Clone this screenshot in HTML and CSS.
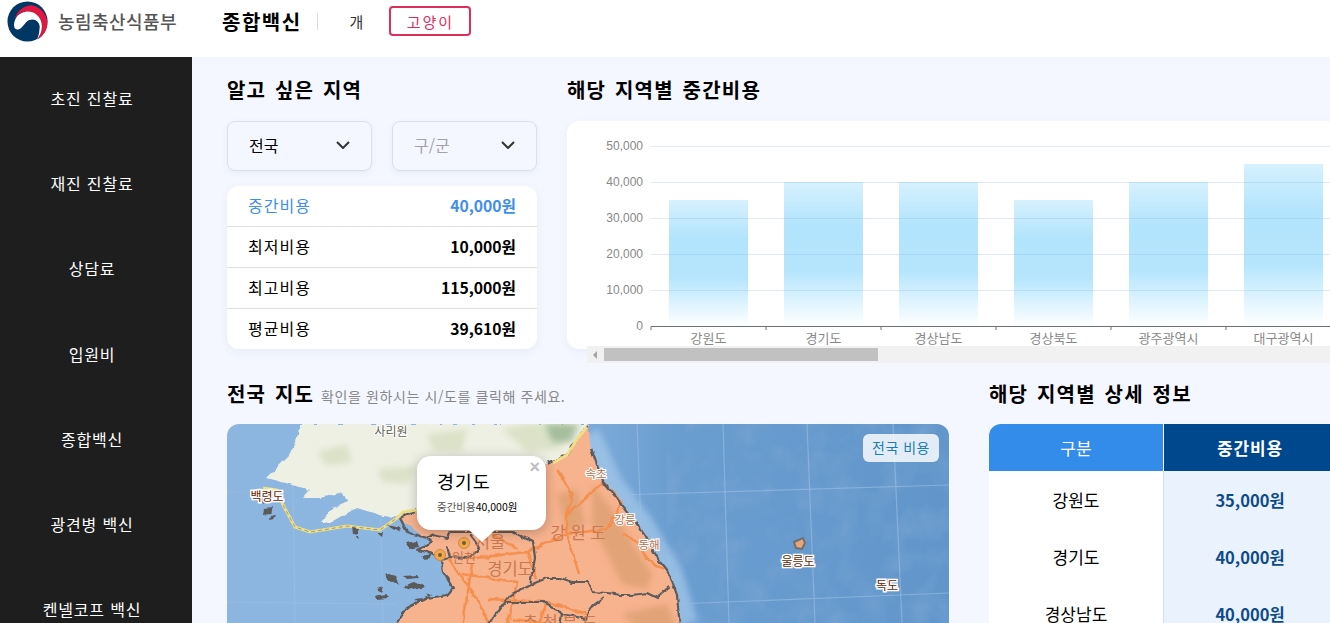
FILE: index.html
```html
<!DOCTYPE html>
<html lang="ko">
<head>
<meta charset="UTF-8">
<title>종합백신 - 농림축산식품부</title>
<meta name="viewport" content="width=device-width, initial-scale=1.0">
<link rel="stylesheet" href="styles.css">
</head>
<body>
<header class="topbar">
    <div class="brand">
        <svg class="brand-logo" viewBox="0 0 42 42" width="41" height="41">
            <circle cx="21" cy="21" r="20.500" fill="#003764"/>
            <path fill="#e0173f" d="M8 18 C11 9 19 4 26 4.500 C35 6 41 14 41.400 22 C41.500 30 37 36 31 39.700 C35 35 37 28 35 21 C32 13 24 10 18 11 C13 12 10 15 8 18 Z"/>
            <path fill="#fff" d="M7.500 27 C6 20 11 12 19 11 C27 10 34 15 35.500 23 C36.500 29 34.500 35 31 39 C33 34 33.500 30 33 26 C33 21 27 18 22 20 C18 22 16 28 12 29 C10 29.500 8 29 7.500 27 Z"/>
            <circle cx="26" cy="26.500" r="7.500" fill="#003764"/>
        </svg>
        <span class="brand-name">농림축산식품부</span>
    </div>
    <strong class="page-name">종합백신</strong>
    <span class="divider"></span>
    <a class="pet-tab">개</a>
    <a class="pet-tab active">고양이</a>
</header>

<div class="layout">
    <nav class="sidebar">
        <a>초진 진찰료</a>
        <a>재진 진찰료</a>
        <a>상담료</a>
        <a>입원비</a>
        <a>종합백신</a>
        <a>광견병 백신</a>
        <a>켄넬코프 백신</a>
    </nav>

    <main class="content">
        <div class="row row-top">
            <section class="area-panel">
                <h2 class="section-title">알고 싶은 지역</h2>
                <div class="select-row">
                    <div class="select-box">
                        <span>전국</span>
                        <svg class="chevron" viewBox="0 0 14 8" width="14" height="8"><path d="M1 1 L7 7 L13 1" fill="none" stroke="#333" stroke-width="2"/></svg>
                    </div>
                    <div class="select-box placeholder">
                        <span>구/군</span>
                        <svg class="chevron" viewBox="0 0 14 8" width="14" height="8"><path d="M1 1 L7 7 L13 1" fill="none" stroke="#333" stroke-width="2"/></svg>
                    </div>
                </div>
                <ul class="cost-list">
                    <li class="highlight"><span>중간비용</span><b>40,000원</b></li>
                    <li><span>최저비용</span><b>10,000원</b></li>
                    <li><span>최고비용</span><b>115,000원</b></li>
                    <li><span>평균비용</span><b>39,610원</b></li>
                </ul>
            </section>

            <section class="chart-panel">
                <h2 class="section-title">해당 지역별 중간비용</h2>
                <div class="chart-card">
                    <svg class="chart" viewBox="0 0 800 228" width="800" height="228">
                        <defs>
                            <linearGradient id="barFill" x1="0" y1="0" x2="0" y2="1">
                                <stop offset="0" stop-color="#5cc6fb" stop-opacity="0.25"/>
                                <stop offset="0.3" stop-color="#5cc6fb" stop-opacity="0.47"/>
                                <stop offset="0.62" stop-color="#5cc6fb" stop-opacity="0.45"/>
                                <stop offset="1" stop-color="#5cc6fb" stop-opacity="0"/>
                            </linearGradient>
                        </defs>
                        <g class="grid">
                            <line x1="84" x2="800" y1="25.500" y2="25.500"/>
                            <line x1="84" x2="800" y1="61.500" y2="61.500"/>
                            <line x1="84" x2="800" y1="97.500" y2="97.500"/>
                            <line x1="84" x2="800" y1="133.500" y2="133.500"/>
                            <line x1="84" x2="800" y1="169.500" y2="169.500"/>
                        </g>
                        <g class="y-labels">
                            <text x="76" y="29">50,000</text>
                            <text x="76" y="65">40,000</text>
                            <text x="76" y="101">30,000</text>
                            <text x="76" y="137">20,000</text>
                            <text x="76" y="173">10,000</text>
                            <text x="76" y="209">0</text>
                        </g>
                        <g fill="url(#barFill)">
                            <rect x="102" y="79" width="79" height="126"/>
                            <rect x="217" y="61" width="79" height="144"/>
                            <rect x="332" y="61" width="79" height="144"/>
                            <rect x="447" y="79" width="79" height="126"/>
                            <rect x="562" y="61" width="79" height="144"/>
                            <rect x="677" y="43" width="79" height="162"/>
                        </g>
                        <path class="axis" d="M84 209 V205.500 H800 M199 205.500 V209 M314 205.500 V209 M429 205.500 V209 M544 205.500 V209 M659 205.500 V209 M774 205.500 V209"/>
                        <g class="x-labels">
                            <text x="141.500" y="222">강원도</text>
                            <text x="256.500" y="222">경기도</text>
                            <text x="371.500" y="222">경상남도</text>
                            <text x="486.500" y="222">경상북도</text>
                            <text x="601.500" y="222">광주광역시</text>
                            <text x="716.500" y="222">대구광역시</text>
                        </g>
                    </svg>
                </div>
                <div class="scrollbar">
                    <span class="scroll-arrow"></span>
                    <span class="scroll-thumb"></span>
                </div>
            </section>
        </div>

        <div class="row row-bottom">
            <section class="map-panel">
                <h2 class="section-title">전국 지도 <small>확인을 원하시는 시/도를 클릭해 주세요.</small></h2>
                <div class="map-box">
                    <svg class="map" viewBox="0 0 722 199" width="722" height="199">
                        <defs>
                            <linearGradient id="sea" x1="0" y1="0" x2="1" y2="0">
                                <stop offset="0" stop-color="#8cb5df"/>
                                <stop offset="0.4" stop-color="#8db7e0"/>
                                <stop offset="0.62" stop-color="#6a9dd0"/>
                                <stop offset="1" stop-color="#6296cb"/>
                            </linearGradient>
                            <filter id="soft" x="-20%" y="-20%" width="140%" height="140%"><feGaussianBlur stdDeviation="3"/></filter>
                            <filter id="rough" x="-5%" y="-5%" width="110%" height="110%">
                                <feTurbulence type="fractalNoise" baseFrequency="0.12" numOctaves="2" seed="4"/>
                                <feDisplacementMap in="SourceGraphic" scale="5" xChannelSelector="R" yChannelSelector="G"/>
                            </filter>
                            <filter id="mottle" x="0" y="0" width="100%" height="100%">
                                <feTurbulence type="fractalNoise" baseFrequency="0.035" numOctaves="3" seed="9"/>
                                <feColorMatrix values="0 0 0 0 0.25  0 0 0 0 0.42  0 0 0 0 0.68  1.600 0 0 0 -0.650"/>
                            </filter>
                        </defs>
                        <rect width="722" height="199" fill="url(#sea)"/>
                        <rect class="sea-mottle" x="440" width="282" height="199" filter="url(#mottle)"/>
                        <path class="coast-glow" filter="url(#soft)" d="M362 10 L385 60 L415 100 L445 150 L460 200"/>
                        <!-- 경위선 -->
                        <g class="graticule">
                            <path d="M66 60 L68 199 M153 60 L156 199 M410 0 L414 100 M496 0 L502 199 M580 0 L588 199 M666 0 L675 199"/>
                            <path d="M0 68 L60 68 M390 71 L722 61 M0 178 L170 180 M450 180 L722 169"/>
                        </g>
                        <!-- 북측 육지 -->
                        <path class="land-north" filter="url(#rough)" d="M73 0 L70 14 L63 31 L40 54 L66 61 L83 66 L76 74 L93 74 L116 68 L120 78 L106 84 L93 98 L106 98 L130 84 L153 91 L166 94 L173 89 L190 86 L320 40 L340 31 L351 14 L360 0 Z"/>
                        <g class="relief-green" filter="url(#soft)">
                            <path d="M275 5 L300 0 H345 L335 25 L300 28 Z"/>
                            <path d="M90 28 L120 20 L125 38 L100 42 Z"/>
                            <path d="M150 45 L190 42 L180 60 L155 58 Z"/>
                            <path d="M200 10 L240 5 L235 28 L205 26 Z"/>
                        </g>
                        <path class="relief-dark" filter="url(#soft)" d="M318 0 H352 L345 18 L325 18 Z"/>
                        <!-- 남측 육지 -->
                        <path class="land-south" filter="url(#rough)" d="M360 0 L364 24 L376 58 L393 78 L413 104 L433 138 L443 151 L450 171 L453 205 H170 L170 199 L180 184 L200 174 L220 171 L226 164 L216 148 L214 135 L200 128 L190 126 L205 118 L200 114 L190 108 L180 100 L173 94 L190 86 L320 40 L340 31 L351 14 Z"/>
                        <g class="relief-brown" filter="url(#soft)">
                            <path d="M365 60 L385 85 L400 110 L425 150 L420 165 L395 160 L380 130 L365 100 Z"/>
                            <path d="M330 70 L350 65 L358 100 L340 110 Z"/>
                            <path d="M395 190 L440 180 L450 205 H410 Z"/>
                        </g>
                        <g class="roads" filter="url(#rough)">
                            <path d="M222 135 L250 175 L262 200 M240 135 L300 128 L340 110 L380 105 L395 78 L376 58 M300 128 L310 155 M340 110 L352 150 M262 175 L320 178 L360 190 M320 178 L310 205 M376 58 L363 70 L340 90 L340 110 M395 110 L410 118 L420 135 L435 145"/>
                            <path d="M235 150 L290 158 L280 205 M265 110 L290 125 M245 140 L235 205 M330 45 L345 70 L340 90 M285 195 L360 205"/>
                        </g>
                        <g class="borders" filter="url(#rough)">
                            <path d="M173 94 L180 108 L200 114 L206 111 L220 114 L223 108 L240 108 L253 108 L270 108 L286 108 L306 118 L308 134 L303 161 L283 171 L270 188 L263 199 L245 205"/>
                            <path d="M303 161 L320 154 L333 154 L346 158 L360 158 L365 168 L380 169 L393 171 L405 171 L420 169 L430 174 L443 163"/>
                            <path d="M363 184 L376 174 M280 178 L316 178 L335 190 L360 195 L363 184 M335 190 L332 205"/>
                            <path d="M220 121 L223 133 L240 134 L253 124 L243 111 M200 114 L205 118 L190 126 L200 128 L214 135 M223 133 L214 135"/>
                            <path d="M173 94 L190 86 M214 135 L216 148 L226 164 L220 171 L200 174 L180 184 L170 199"/>
                            <path d="M320 40 L340 31 L351 14 L360 2"/>
                            <path d="M364 24 L376 58 L393 78 L413 104 L433 138 L443 151 L450 171 L453 205"/>
                        </g>
                        <path class="nll" d="M36 64 L50 66 L56 81 L68 103 L83 108 L120 102 L153 106 L170 94 L176 88 L190 86"/>
                        <path class="nll" d="M326 39 L340 31 L351 14 L360 3"/>
                        <path class="nll-dash" d="M56 81 L68 103 L83 108 L120 102 L153 106 L170 94"/>
                        <!-- 섬 -->
                        <g class="islets" filter="url(#rough)">
                            <path d="M37 84 L45 83 L43 90 L36 91 Z"/>
                            <path d="M43 92 L49 91 L47 95 L42 96 Z"/>
                            <path d="M125 104 L132 105 L130 110 L126 109 Z M128 112 L131 112 L130 116 Z M150 108 L156 108 L155 112 Z"/>
                            <path d="M160 101 L175 104 L172 108 Z M178 119 L190 117 L192 123 L182 125 Z M195 132 L205 130 L200 136 Z"/>
                            <path d="M158 148 L168 152 L172 160 L163 157 Z M177 152 L190 151 L192 154 L180 155 Z M176 162 L188 158 L198 163 L186 166 Z M150 165 L156 163 L154 168 Z M148 172 L158 170 L162 174 L149 175 Z"/>
                            <path d="M188 175 L195 174 L194 178 Z M200 168 L205 170 L202 173 Z"/>
                        </g>
                        <path class="ulleung" d="M567 118 L576 114 L578 119 L575 125 L569 124 Z"/>
                        <path class="island-small" d="M31 71 L42 69 L45 76 L36 80 Z"/>
                        <circle class="city-outer" cx="237" cy="119" r="5.500"/><circle class="city-dot" cx="237" cy="119" r="2"/>
                        <circle class="city-outer" cx="213" cy="131" r="5.500"/><circle class="city-dot" cx="213" cy="131" r="2"/>
                        <!-- 지명 -->
                        <text class="label-plain" x="164" y="12">사리원</text>
                        <text class="label-island" x="40" y="77">백령도</text>
                        <text class="label-region big" x="351" y="115">강 원 도</text>
                        <text class="label-region" x="283" y="151">경기도</text>
                        <text class="label-region" x="263" y="124">서울</text>
                        <text class="label-region small" x="237" y="138">인천</text>
                        <text class="label-region" x="333" y="205">충 청 북 도</text>
                        <text class="label-coast" x="369" y="54">속초</text>
                        <text class="label-coast" x="398" y="100">강릉</text>
                        <text class="label-coast" x="422" y="125">동해</text>
                        <text class="label-island" x="571" y="142">울릉도</text>
                        <text class="label-island" x="660" y="166">독도</text>
                    </svg>
                    <a class="map-button">전국 비용</a>
                    <div class="map-popup">
                        <span class="popup-close">×</span>
                        <strong>경기도</strong>
                        <p><span>중간비용</span>40,000원</p>
                    </div>
                </div>
            </section>

            <section class="detail-panel">
                <h2 class="section-title">해당 지역별 상세 정보</h2>
                <table class="detail-table">
                    <thead>
                        <tr><th>구분</th><th>중간비용</th></tr>
                    </thead>
                    <tbody>
                        <tr><td>강원도</td><td>35,000원</td></tr>
                        <tr><td>경기도</td><td>40,000원</td></tr>
                        <tr><td>경상남도</td><td>40,000원</td></tr>
                    </tbody>
                </table>
            </section>
        </div>
    </main>
</div>
</body>
</html>
```

FILE: styles.css
```css
* {
    box-sizing: border-box;
}

html, body {
    height: 100%;
}

body {
    font-family: "Noto Sans CJK KR", "Noto Sans", sans-serif;
    background-color: #fff;
    color: #000;
    margin: 0;
    padding: 0;
    overflow: hidden;
}

.topbar {
    display: flex;
    align-items: center;
    height: 57px;
    padding: 0 0 15px 7px;
    background-color: #fff;
}

.brand {
    display: flex;
    align-items: center;
    width: 215px;
}

.brand-logo {
    flex: none;
}

.brand-name {
    margin-left: 10px;
    font-size: 18px;
    letter-spacing: 0.45px;
    color: #555;
    white-space: nowrap;
    font-weight: 500;
}

.page-name {
    font-size: 20px;
    letter-spacing: 1.500px;
}

.divider {
    width: 1px;
    height: 17px;
    background-color: #ddd;
    margin: 0 32px 0 15px;
}

.pet-tab {
    font-size: 15px;
    color: #333;
}

.pet-tab.active {
    display: flex;
    align-items: center;
    justify-content: center;
    width: 82px;
    height: 30px;
    margin-left: 26px;
    border: 2px solid #de2e5c;
    border-radius: 4px;
    color: #de2e5c;
    letter-spacing: 2px;
}

.layout {
    display: flex;
    height: calc(100% - 57px);
}

.sidebar {
    flex: none;
    display: flex;
    flex-direction: column;
    width: 192px;
    padding-right: 8px;
    background-color: #1e1e1e;
    color: #fff;
    font-size: 16px;
    letter-spacing: 0.8px;
    text-align: center;
    overflow: hidden;
}

.sidebar a {
    flex: none;
    height: 85.200px;
    line-height: 83px;
}

.content {
    flex: 1;
    min-width: 0;
    padding: 21px 0 0 35px;
    background-color: #f4f7ff;
    overflow: hidden;
}

.row {
    display: flex;
}

.row-top {
    gap: 30px;
    height: 304px;
}

.section-title {
    height: 24px;
    margin: 0 0 19px;
    font-size: 20px;
    line-height: 24px;
    font-weight: 700;
    letter-spacing: 1.200px;
    word-spacing: 2px;
    white-space: nowrap;
}

.section-title small {
    margin-left: -2px;
    font-size: 14px;
    line-height: 1;
    font-weight: 400;
    color: #888;
    letter-spacing: 0.6px;
    word-spacing: 0;
}

.area-panel {
    flex: none;
    width: 310px;
}

.select-row {
    display: flex;
    gap: 20px;
}

.select-box {
    display: flex;
    align-items: center;
    justify-content: space-between;
    width: 145px;
    height: 50px;
    padding: 0 21px 2px;
    border: 1px solid #dcdfe8;
    border-radius: 8px;
    background-color: #f4f7ff;
    box-shadow: 0 2px 6px rgba(40, 60, 110, 0.06);
    font-size: 16px;
}

.select-box.placeholder {
    color: #a3a3a3;
}

.cost-list {
    list-style: none;
    margin: 15px 0 0;
    padding: 0;
    border-radius: 12px;
    background-color: #fff;
    box-shadow: 0 3px 10px rgba(40, 60, 110, 0.06);
    font-size: 16px;
}

.cost-list li {
    display: flex;
    align-items: center;
    justify-content: space-between;
    height: 41px;
    padding: 0 21px 2px;
    border-bottom: 1px solid #dddfe4;
}

.cost-list li span {
    letter-spacing: 1px;
}

.cost-list li b {
    font-size: 15.700px;
}

.cost-list li:last-child {
    height: 40px;
    border-bottom: 0;
}

.cost-list .highlight {
    color: #3e8eed;
}

.chart-panel {
    position: relative;
    flex: none;
    width: 900px;
}

.chart-card {
    height: 228px;
    border-radius: 12px;
    background-color: #fff;
    box-shadow: 0 3px 10px rgba(40, 60, 110, 0.05);
    overflow: hidden;
}

.chart {
    display: block;
}

.grid line {
    stroke: #e0e8f6;
    stroke-width: 1;
}

.y-labels text {
    font-size: 12px;
    fill: #888;
    text-anchor: end;
    font-family: "Liberation Sans", sans-serif;
}

.x-labels text {
    font-size: 13px;
    fill: #888;
    text-anchor: middle;
}

.axis {
    fill: none;
    stroke: #6e7079;
    stroke-width: 1;
}

.scrollbar {
    position: absolute;
    left: 20px;
    top: 268px;
    display: flex;
    align-items: center;
    width: 880px;
    height: 17px;
    background-color: #f1f1f1;
}

.scroll-arrow {
    width: 0;
    height: 0;
    margin: 0 7px 0 6px;
    border-top: 4px solid transparent;
    border-bottom: 4px solid transparent;
    border-right: 4px solid #a3a3a3;
}

.scroll-thumb {
    width: 274px;
    height: 13px;
    background-color: #c1c1c1;
}

.row-bottom {
    gap: 40px;
}

.map-panel {
    flex: none;
    width: 722px;
}

.row-bottom .section-title {
    margin-bottom: 18px;
}

.map-box {
    position: relative;
    height: 199px;
    border-radius: 12px 12px 0 0;
    overflow: hidden;
}

.map {
    display: block;
}

.sea-mottle {
    opacity: 0.5;
}

.coast-glow {
    fill: none;
    stroke: #a6c9ea;
    stroke-width: 22;
    opacity: 0.7;
}

.graticule path {
    fill: none;
    stroke: #9fc0e2;
    stroke-width: 1.200;
    opacity: 0.6;
}

.land-north {
    fill: #eff0e4;
}

.relief-green path {
    fill: #c8d3ac;
    opacity: 0.5;
}

.relief-dark {
    fill: #81a67f;
    opacity: 0.6;
}

.land-south {
    fill: #f7b28e;
}

.relief-brown path {
    fill: #d49a68;
    opacity: 0.6;
}

.roads path {
    fill: none;
    stroke: #f58f4e;
    stroke-width: 2.500;
    stroke-linejoin: round;
}

.borders path {
    fill: none;
    stroke: #5c5c5c;
    stroke-width: 2.200;
    stroke-linejoin: round;
}

.nll {
    fill: none;
    stroke: #f1df85;
    stroke-width: 3;
}

.nll-dash {
    fill: none;
    stroke: #a09a70;
    stroke-width: 1;
    stroke-dasharray: 4 3;
}

.islets path {
    fill: #5a5a5a;
}

.ulleung {
    fill: #e9a678;
    stroke: #6f6f6f;
    stroke-width: 2;
}

.island-small {
    fill: #8a6a58;
}

.city-outer {
    fill: #f2a84e;
    stroke: #cc8a40;
}

.city-dot {
    fill: #7a5a30;
}

.label-plain, .label-island, .label-region, .label-coast {
    text-anchor: middle;
    paint-order: stroke;
}

.label-plain {
    font-size: 12px;
    fill: #5f5f50;
    stroke: #fff;
    stroke-width: 2px;
}

.label-island {
    font-size: 12px;
    fill: #6a1d00;
    stroke: #fff;
    stroke-width: 3px;
}

.label-region {
    font-size: 16.500px;
    fill: #c9794f;
}

.label-region.small {
    font-size: 13px;
}

.label-coast {
    font-size: 11.500px;
    fill: #b0724e;
    stroke: #fff;
    stroke-width: 2px;
}

.map-button {
    position: absolute;
    top: 10px;
    right: 10px;
    width: 76px;
    height: 28px;
    line-height: 27px;
    text-align: center;
    border-radius: 6px;
    background-color: rgba(255, 255, 255, 0.82);
    color: #1a7fb5;
    font-size: 14px;
    letter-spacing: 0.5px;
}

.map-popup {
    position: absolute;
    left: 190px;
    top: 32px;
    width: 129px;
    height: 74px;
    padding: 12px 0 0 20px;
    border-radius: 14px;
    background-color: #fff;
    box-shadow: 0 2px 12px rgba(0, 0, 0, 0.25);
}

.map-popup::after {
    content: '';
    position: absolute;
    left: 52px;
    top: 74px;
    border-left: 13px solid transparent;
    border-right: 13px solid transparent;
    border-top: 12px solid #fff;
}

.map-popup strong {
    display: block;
    font-size: 18.500px;
    line-height: 26px;
    font-weight: 400;
    letter-spacing: 0.8px;
}

.map-popup p {
    margin: 5px 0 0;
    font-size: 10.500px;
    line-height: 16px;
    white-space: nowrap;
}

.map-popup p span {
    color: #555;
}

.popup-close {
    position: absolute;
    top: 0;
    right: 6px;
    font-family: "Liberation Sans", sans-serif;
    font-size: 18px;
    line-height: 22px;
    font-weight: 700;
    color: #bdbdbd;
}

.detail-panel {
    flex: none;
    width: 347px;
}

.detail-table {
    width: 347px;
    border-collapse: separate;
    border-spacing: 0;
    table-layout: fixed;
    font-size: 17px;
    text-align: center;
}

.detail-table th {
    height: 47px;
    padding: 0;
    font-weight: 400;
    color: #fff;
    background-color: #338bea;
}

.detail-table th:first-child {
    width: 175px;
    border-top-left-radius: 12px;
    border-right: 1px solid #fff;
}

.detail-table th:nth-child(2) {
    font-weight: 700;
    letter-spacing: 0.8px;
    background-color: #00488e;
}

.detail-table td {
    height: 57px;
    padding: 0;
    background-color: #fff;
}

.detail-table td:first-child {
    border-right: 1px solid #d9dfe8;
}

.detail-table td:nth-child(2) {
    font-size: 16.500px;
    font-weight: 700;
    color: #0d4a8a;
    background-color: #e9f2fd;
}
```
